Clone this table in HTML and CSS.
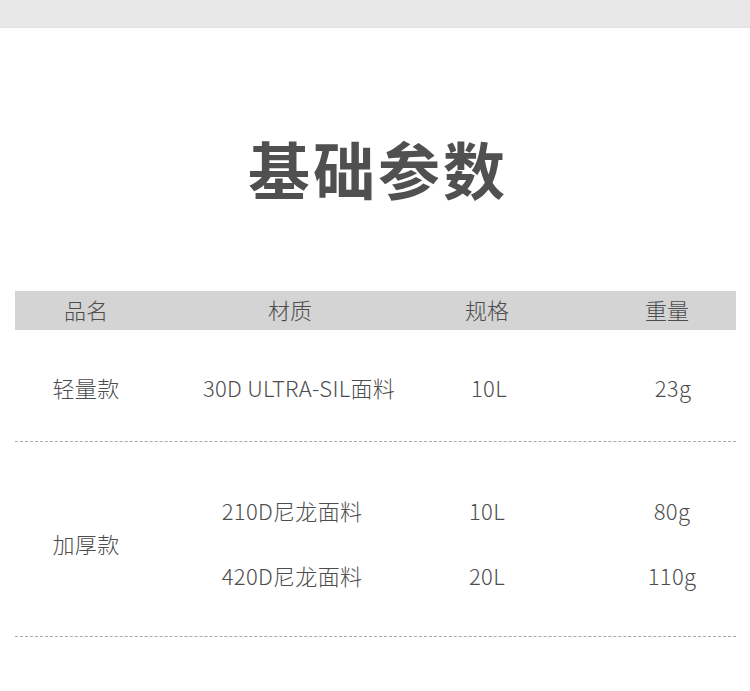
FILE: index.html
```html
<!DOCTYPE html>
<html lang="zh-CN">
<head>
<meta charset="utf-8">
<title>基础参数</title>
<link rel="stylesheet" href="styles.css">
</head>
<body>
<div class="topbar"></div>
<h1 class="title">基础参数</h1>
<div class="table">
  <div class="thead">
    <div class="c1">品名</div>
    <div class="c2">材质</div>
    <div class="c3">规格</div>
    <div class="c4">重量</div>
  </div>
  <div class="row row-light">
    <div class="c1">轻量款</div>
    <div class="c2 shift">30D ULTRA-SIL面料</div>
    <div class="c3 shift-s">10L</div>
    <div class="c4 shift-s">23g</div>
  </div>
  <div class="row row-thick">
    <div class="c1 name">加厚款</div>
    <div class="sub">
      <div class="line">
        <div class="c2">210D尼龙面料</div>
        <div class="c3">10L</div>
        <div class="c4">80g</div>
      </div>
      <div class="line">
        <div class="c2">420D尼龙面料</div>
        <div class="c3">20L</div>
        <div class="c4">110g</div>
      </div>
    </div>
  </div>
</div>
</body>
</html>
```
FILE: styles.css
```css
* { box-sizing: border-box; }
html, body { margin: 0; padding: 0; background: #fff; }
body {
  width: 750px;
  font-family: "Noto Sans CJK SC", "Noto Sans", sans-serif;
  color: #4d4d4d;
}
.topbar {
  height: 28px;
  background: #e8e8e8;
  border-bottom: 1px solid #e2e2e2;
}
.title {
  margin: 0;
  padding-top: 100px;
  padding-left: 6px;
  height: 263px;
  text-align: center;
  font-size: 62px;
  line-height: 80px;
  font-weight: 700;
  color: #505050;
  letter-spacing: 3px;
}
.table {
  margin: 0 14px 0 15px;
}
.thead, .line, .row-light {
  display: grid;
  grid-template-columns: 142px 270px 120px 1fr;
  align-items: center;
  text-align: center;
}
.thead {
  height: 39px;
  padding-bottom: 4px;
  background: #d4d4d4;
  font-size: 22px;
  line-height: 28px;
  font-weight: 300;
}
.thead .c2 { transform: translateX(-2px); }
.thead .c4 { padding-left: 51px; }
.row {
  border-bottom: 1px dashed #a8a8a8;
  font-size: 22px;
  line-height: 28px;
  font-weight: 300;
  letter-spacing: 0.3px;
}
.row-light {
  padding: 43px 0 40px;
}
.c4 { padding-left: 57px; }
.shift { transform: translateX(7px); }
.shift-s { transform: translateX(2px); }
.row-light .c4 { transform: translateX(3px); }
.line .c4 { transform: translateX(2px); }
.row-thick {
  display: grid;
  grid-template-columns: 142px 1fr;
  align-items: center;
  padding: 54px 0 47px;
}
.row-thick .name {
  text-align: center;
}
.sub {
  display: flex;
  flex-direction: column;
  gap: 37px;
}
.line {
  grid-template-columns: 270px 120px 1fr;
}
```
